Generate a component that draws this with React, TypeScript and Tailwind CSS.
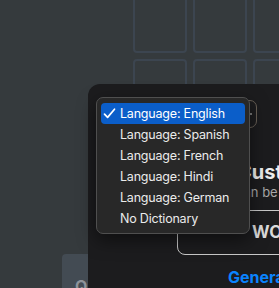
import React from "react";

const items = [
  "Language: English",
  "Language: Spanish",
  "Language: French",
  "Language: Hindi",
  "Language: German",
  "No Dictionary",
];

export default function App() {
  return (
    <div
      className="relative w-[279px] h-[288px] overflow-hidden bg-[#353a3d]"
      style={{ fontFamily: "Inter, 'Liberation Sans', sans-serif" }}
    >
      {/* background tile grid */}
      <div className="absolute left-[133px] top-[-5px] grid grid-cols-[54px_54px_54px] gap-[6px]">
        {Array.from({ length: 6 }).map((_, i) => (
          <div key={i} className="h-[58px] rounded-[4px] border-2 border-[#3c4550]" />
        ))}
      </div>

      {/* Q tile */}
      <div className="absolute left-[62px] top-[254px] w-[40px] h-[40px] rounded-tl-[4px] bg-[#434b53] pl-[13px] pt-[20px]">
        <span className="text-[16px] font-bold text-[#8d939a] leading-none">Q</span>
      </div>

      {/* dark panel */}
      <div className="absolute left-[88px] top-[84px] right-0 bottom-0 rounded-tl-[12px] bg-[#1c1c1e] flex flex-col overflow-hidden whitespace-nowrap">
        <div className="mt-[16px] ml-[92px] w-[77px] h-[28px] shrink-0 rounded-[7px] border border-[#6a6157] flex items-center justify-end pr-[4px]">
          <span className="w-[2px] h-[2px] rounded-full bg-[#9a9a9a]" />
        </div>
        <div className="mt-[32px] ml-[149px] text-[20px] leading-[24px] font-bold text-[#ededed]">
          Custom Dictionary
        </div>
        <div className="ml-[146px] text-[13px] leading-[16px] text-[#a8a8a8]">
          Can be added
        </div>
        <div className="mt-[10px] ml-[89px] h-[45px] shrink-0 w-[260px] rounded-[8px] border border-[#c9c9c9] flex items-center pl-[74px]">
          <span className="text-[17px] font-bold text-[#dadada]">WORDS</span>
        </div>
        <div className="mt-[12px] ml-[140px] text-[16px] leading-[20px] font-bold text-[#0a84ff]">
          Generate
        </div>
      </div>

      {/* dropdown menu */}
      <div className="absolute left-[96px] top-[97px] w-[154px] rounded-[7px] border border-[#4f4f4f] bg-[#282828] pt-[5px] pb-[4px] px-[4px] shadow-[0_6px_18px_rgba(0,0,0,0.5)]">
        {items.map((t, i) => (
          <div
            key={t}
            className={
              "relative h-[21px] flex items-center pl-[19px] pt-[1px] rounded-[4px] text-[12.5px] tracking-[-0.2px] " +
              (i === 0 ? "bg-[#0b5ec9] text-white" : "text-[#ebebeb]")
            }
          >
            {i === 0 && (
              <svg
                className="absolute left-[2px] top-[5px]"
                width="13"
                height="11"
                viewBox="0 0 13 11"
                fill="none"
              >
                <path
                  d="M1.5 6.2 L4.6 9.4 L11.5 1.2"
                  stroke="white"
                  strokeWidth="1.7"
                  strokeLinecap="round"
                  strokeLinejoin="round"
                />
              </svg>
            )}
            {t}
          </div>
        ))}
      </div>
    </div>
  );
}
